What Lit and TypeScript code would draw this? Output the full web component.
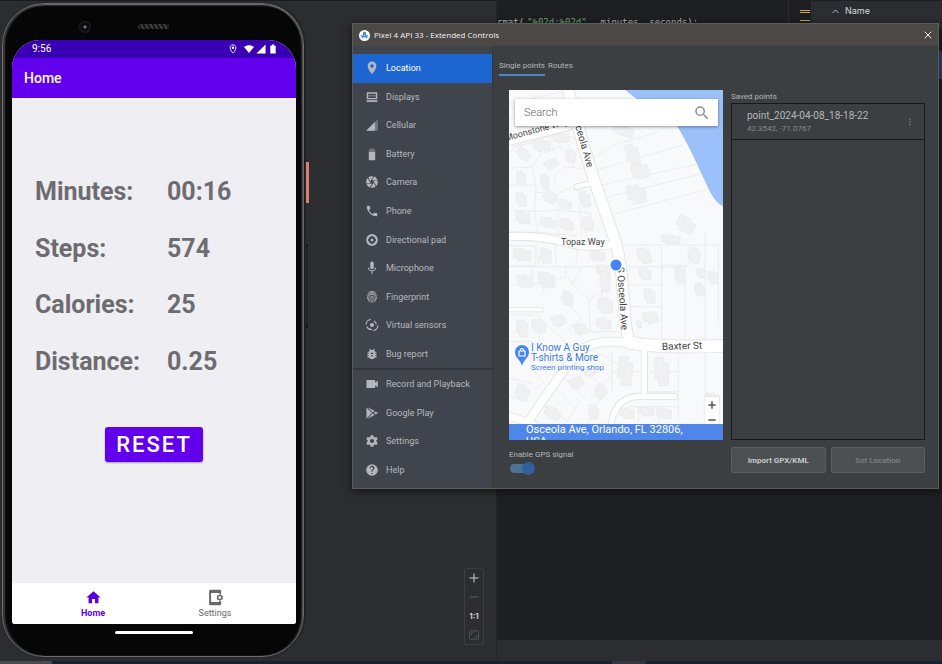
import { LitElement, html, svg, css, type TemplateResult, type SVGTemplateResult } from "lit";
import { customElement, property, state } from "lit/decorators.js";
import { classMap } from "lit/directives/class-map.js";

const ICONS: Record<string, SVGTemplateResult> = {
  location: svg`<path d="M12 1C7.600 1 4.500 4.200 4.500 8.500c0 5.500 7.500 14 7.500 14s7.500-8.500 7.500-14C19.500 4.200 16.400 1 12 1zm0 10.500a3 3 0 1 1 0-6 3 3 0 0 1 0 6z"/>`,
  displays: svg`<path d="M3 4h18v12H3zM5.500 6.500v7h13v-7z" fill-rule="evenodd"/><path d="M3 17.500h18v3H3z"/><path d="M5.500 9h13v2h-13z" opacity=".5"/>`,
  cellular: svg`<path d="M22 2v20H2z" opacity=".45"/><path d="M17 7v15H2z"/>`,
  battery: svg`<path d="M9 2h6v2h2.500v4h-11V4H9z" opacity=".4"/><path d="M6.500 8h11v13a1.500 1.500 0 0 1-1.500 1.500H8A1.500 1.500 0 0 1 6.500 21z"/>`,
  camera: svg`<path d="M9.400 10.500l4.770-8.260C13.470 2.090 12.750 2 12 2c-2.400 0-4.600.850-6.320 2.250l3.660 6.350.060-.1zM21.540 9c-.92-2.920-3.150-5.260-6-6.340L11.880 9h9.660zm.260 1h-7.490l.290.500 4.760 8.250C21 16.970 22 14.610 22 12c0-.690-.070-1.350-.2-2zM8.540 12l-3.900-6.750C3.010 7.030 2 9.390 2 12c0 .690.070 1.350.2 2h7.490l-1.150-2zm-6.080 3c.92 2.920 3.150 5.260 6 6.340L12.120 15H2.460zm11.270 0l-3.900 6.760c.7.150 1.420.240 2.170.240 2.400 0 4.600-.850 6.320-2.250l-3.660-6.350-.930 1.600z"/>`,
  phone: svg`<path d="M6.620 10.790c1.440 2.830 3.760 5.140 6.590 6.590l2.200-2.200c.270-.270.670-.360 1.020-.240 1.120.370 2.330.570 3.570.570.550 0 1 .450 1 1V20c0 .550-.450 1-1 1C10.610 21 3 13.390 3 4c0-.550.450-1 1-1h3.500c.550 0 1 .450 1 1 0 1.250.200 2.450.570 3.570.110.350.030.740-.250 1.020l-2.200 2.200z"/>`,
  dpad: svg`<circle cx="12" cy="12" r="8" fill="none" stroke="currentColor" stroke-width="4.200"/><path d="M12 4.500l3 3.500H9zM12 19.500l3-3.500H9zM4.500 12l3.500-3v6zM19.500 12L16 9v6z" fill="#40444c"/><circle cx="12" cy="12" r="2.600"/>`,
  mic: svg`<path d="M12 14c1.660 0 3-1.340 3-3V4c0-1.660-1.340-3-3-3S9 2.340 9 4v7c0 1.660 1.340 3 3 3zm5.300-3c0 3-2.540 5.100-5.300 5.100S6.700 14 6.700 11H5c0 3.410 2.720 6.230 6 6.720V22h2v-4.280c3.280-.480 6-3.300 6-6.720z"/>`,
  finger: svg`<g fill="none" stroke="currentColor" stroke-width="1.700" opacity=".8"><path d="M6 4.500c4-3 8-3 12 0M3.500 9.500c4-7 13-7 17 0M4 16c-1-13 17-13 16 0M6.500 19.500c-3-16 14-16 11 0M9 21.500c-3-14 9-14 6 0M12 10v12"/></g>`,
  sensors: svg`<circle cx="12" cy="12" r="3.600"/><path fill="none" stroke="currentColor" stroke-width="2" d="M2 11c0-4 3-8 8-8.500M3 14.500A9 9 0 0 0 12 20M22 13c0 4-3 8-8 8.500M19.500 11A8 8 0 0 0 15 5"/>`,
  bug: svg`<path d="M20 8h-2.810c-.450-.780-1.070-1.450-1.820-1.960L17 4.410 15.590 3l-2.170 2.170a6 6 0 0 0-2.830 0L8.410 3 7 4.410l1.620 1.630C7.880 6.550 7.260 7.220 6.810 8H4v2h2.090c-.050.330-.090.660-.090 1v1H4v2h2v1c0 .340.040.670.090 1H4v2h2.810a6 6 0 0 0 10.380 0H20v-2h-2.090c.050-.330.090-.660.090-1v-1h2v-2h-2v-1c0-.340-.040-.670-.090-1H20V8zm-6 8h-4v-2h4v2zm0-4h-4v-2h4v2z"/>`,
  video: svg`<path d="M17.500 10V6c0-.550-.450-1-1-1h-13c-.550 0-1 .450-1 1v12c0 .550.450 1 1 1h13c.550 0 1-.450 1-1v-4l4.500 4V6z"/>`,
  play: svg`<path d="M2.500 2.500l9.500 9.500-9.500 9.500z"/><path d="M4.500 2l12 6.700-3 3zM4.500 22l12-6.700-3-3zM18 9.500l4.500 2.500-4.500 2.500-2.500-2.500z"/>`,
  gear: svg`<path d="M19.430 12.980c.040-.320.070-.640.070-.980s-.030-.660-.070-.980l2.110-1.650c.190-.150.240-.420.120-.640l-2-3.460c-.120-.220-.390-.300-.610-.220l-2.490 1c-.520-.400-1.080-.730-1.690-.980l-.380-2.650A.49.49 0 0 0 14 2h-4c-.250 0-.460.180-.490.420l-.380 2.650c-.610.250-1.170.590-1.690.980l-2.490-1c-.230-.090-.490 0-.610.220l-2 3.460c-.130.220-.070.490.120.640l2.110 1.650c-.040.320-.070.650-.070.980s.030.660.070.980l-2.110 1.650c-.190.150-.240.420-.120.640l2 3.460c.120.220.390.300.610.220l2.490-1c.520.400 1.080.730 1.690.980l.380 2.650c.030.240.240.420.490.420h4c.250 0 .460-.180.490-.420l.380-2.650c.610-.250 1.170-.590 1.690-.980l2.490 1c.230.090.490 0 .610-.220l2-3.460c.120-.220.070-.490-.120-.640zM12 15.500a3.500 3.500 0 1 1 0-7 3.500 3.500 0 0 1 0 7z"/>`,
  help: svg`<path d="M12 2a10 10 0 1 0 0 20 10 10 0 0 0 0-20zm1 17h-2v-2h2zm2.070-7.750l-.9.920C13.450 12.900 13 13.500 13 15h-2v-.5c0-1.100.450-2.100 1.170-2.830l1.240-1.260A2 2 0 1 0 10 9H8a4 4 0 1 1 7.070 2.250z"/>`,
  search: svg`<path d="M15.500 14h-.790l-.280-.270A6.470 6.470 0 0 0 16 9.500 6.500 6.500 0 1 0 9.500 16c1.610 0 3.090-.590 4.230-1.570l.270.280v.790l5 4.990L20.490 19zm-6 0a4.500 4.500 0 1 1 0-9 4.500 4.500 0 0 1 0 9z"/>`,
  home: svg`<path d="M10 20v-6h4v6h5v-8h3L12 3 2 12h3v8z"/>`,
  appSettings: svg`<path d="M5 1h13a2 2 0 0 1 2 2v4h-2.500V5.500H5.800v13h11.700V17H20v4a2 2 0 0 1-2 2H5a2 2 0 0 1-2-2V3a2 2 0 0 1 2-2z"/><circle cx="18" cy="12" r="2.900" fill="none" stroke="currentColor" stroke-width="2"/><path d="M18 7.300v1.500M18 15.200v1.500M14 9.700l1.200.7M20.800 13.600l1.200.7M14 14.300l1.200-.7M20.800 10.400l1.200-.7" stroke="currentColor" stroke-width="1.800"/>`,
  pinOutline: svg`<path fill="none" stroke="currentColor" stroke-width="2.200" d="M12 2C8 2 5 5 5 9c0 5.500 7 13 7 13s7-7.500 7-13c0-4-3-7-7-7z"/><circle cx="12" cy="9" r="3"/>`,
  wifi: svg`<path d="M12 21.500L0 7c7-5.500 17-5.500 24 0z"/>`,
  signal: svg`<path d="M23 1v22H1z"/>`,
  batteryFull: svg`<path d="M9 1h6v3h3.500v19h-13V4H9z"/>`,
  close: svg`<path fill="none" stroke="currentColor" stroke-width="3" d="M2 2l20 20M22 2L2 22"/>`,
  more: svg`<circle cx="12" cy="4" r="2.500"/><circle cx="12" cy="12" r="2.500"/><circle cx="12" cy="20" r="2.500"/>`,
  chevronUp: svg`<path fill="none" stroke="currentColor" stroke-width="3" d="M2 17L12 7l10 10"/>`,
  plus: svg`<path fill="none" stroke="currentColor" stroke-width="2.500" d="M12 1v22M1 12h22"/>`,
  minus: svg`<path fill="none" stroke="currentColor" stroke-width="2.500" d="M1 12h22"/>`,
  plusBold: svg`<path fill="none" stroke="currentColor" stroke-width="4.500" d="M12 1v22M1 12h22"/>`,
  minusBold: svg`<path fill="none" stroke="currentColor" stroke-width="4.500" d="M1 12h22"/>`,
  fit: svg`<rect x="1" y="2" width="22" height="20" rx="2" fill="none" stroke="currentColor" stroke-width="2"/><path fill="none" stroke="currentColor" stroke-width="2" d="M6 12V7h5M18 12v5h-5"/>`,
};

const icon = (name: string, cls = ""): TemplateResult =>
  html`<svg class="icon ${cls}" viewBox="0 0 24 24" fill="currentColor" aria-hidden="true">${ICONS[name]}</svg>`;

@customElement("phone-screen")
class PhoneScreen extends LitElement {
  static styles = css`
    :host { display: flex; flex-direction: column; position: relative; box-sizing: border-box; width: 302px;
      padding: 36px 7px 32px 9px; border: 1px solid #6d6d6f; border-radius: 42px; background: #060607;
      box-shadow: inset 2px 0 1px #343437, inset 0 1px 2px #8f8f92, inset -2px 0 1px #29292b, inset 4px 0 1px #0c0c0d, 1px 0 2px #17181a;
      font-family: Roboto, sans-serif; }
    .icon { display: block; width: 10px; height: 10px; }
    .sensor { position: absolute; left: 76px; top: 17px; width: 12px; height: 12px; border-radius: 50%;
      background: radial-gradient(circle, #777 0 1px, #0b0c0f 2px 4px, #1b1b1e 5px); }
    .speaker { position: absolute; left: 135px; top: 20px; width: 31px; height: 5px; border-radius: 2px;
      background: repeating-linear-gradient(60deg, #3c3c3e 0 2px, #161617 2px 4px); }
    .power { position: absolute; right: -6px; top: 158px; width: 3px; height: 41px; background: #d9806c; }
    .volume { position: absolute; right: -5px; top: 240px; width: 2px; height: 78px; background: #222326;
      border-block: 3px solid #141517; }
    .screen { flex: 1; display: flex; flex-direction: column; overflow: hidden; border-radius: 28px 28px 3px 3px; background: #efeef3; }
    .status { display: flex; align-items: center; height: 18px; padding: 0 18px 0 20px; background: #3a00b3; color: #fff; font-size: 10px; line-height: 18px; }
    .time { flex: 1; }
    .status .icon + .icon { margin-left: 2px; }
    .status .pin { margin-right: 4px; }
    .appbar { height: 40px; padding-left: 12px; background: #6200ee; color: #fff; font-size: 14px; line-height: 40px; font-weight: 500; margin: 0; }
    .body { flex: 1; padding: 66px 0 0; display: flex; flex-direction: column; align-items: stretch; }
    dl { display: grid; grid-template-columns: 132px 1fr; grid-template-rows: repeat(4, 1fr); align-items: center; height: 226px;
      margin: 0; padding-left: 23px; color: #6d6c70; font-size: 25px; line-height: 30px; font-weight: 700; }
    dd { margin: 0; }
    .reset { align-self: center; width: 98px; height: 35px; margin-top: 37px; padding: 0; border: 0; border-radius: 3px; background: #6200ee; color: #fff;
      font: 500 22px/36px Roboto, sans-serif; letter-spacing: 2px; box-shadow: 0 1px 2px #0005; }
    nav { display: grid; grid-template-columns: 1fr 1fr; height: 41px; padding: 0 20px; background: #fff; }
    nav a { display: flex; flex-direction: column; align-items: center; gap: 1px; padding-top: 6px; color: #68686a; font-size: 9px; line-height: 12px; text-decoration: none; }
    nav a.on { color: #5b00e3; font-weight: 700; }
    nav .icon { width: 17px; height: 17px; }
    .pill { position: absolute; left: 112px; bottom: 22px; width: 78px; height: 3px; border-radius: 2px; background: #fff; }
  `;

  private stats = [["Minutes:", "00:16"], ["Steps:", "574"], ["Calories:", "25"], ["Distance:", "0.25"]];

  render() {
    return html`
      <span class="sensor"></span><span class="speaker"></span>
      <span class="power"></span><span class="volume"></span>
      <div class="screen">
        <div class="status"><span class="time">9:56</span>${icon("pinOutline", "pin")}${icon("wifi")}${icon("signal")}${icon("batteryFull")}</div>
        <h1 class="appbar">Home</h1>
        <div class="body">
          <dl>${this.stats.map(([k, v]) => html`<dt>${k}</dt><dd>${v}</dd>`)}</dl>
          <button class="reset">RESET</button>
        </div>
        <nav>
          <a class="on" href="#home">${icon("home")}Home</a>
          <a href="#settings">${icon("appSettings")}Settings</a>
        </nav>
      </div>
      <span class="pill"></span>`;
  }
}

/* Parcel boundaries, building footprints and road centre lines, in thirds of a map pixel. */
const PARCELS = [
  "M0 60L170 20M12 45l30 60M90 30l20 50M0 105l165-45M20 185L150 150l65 8M12 205l25-22 50-10M87 165l18 45-22 35-70 5M105 210l60-25 45 60M135 160l12 40M180 150l20 60M83 245l10 55-5 75M12 300h78M90 320l65 10 35-20 55 10M155 330l5 45M12 375l80 5 68-5 100 10M88 375l10 65M160 375l-2 80M225 360l5 95M12 440l90 2 110 10M150 300c-10-30 10-55 45-55l50 10M260 385l-20 60",
  "M255 225l75-45 130-40M275 255l260-75M290 300l285-62M310 335l295-72M325 388l280-75M320 480h340M470 480v290M550 480v60h-80M370 545h180M370 600h100M375 665h96M600 440v480M540 540v230M640 480v240",
  "M12 482h80v60h-80M92 482l10 58M150 480l5 65M220 480l-8 60M12 545h300M12 600l110-5M80 545l5 50M122 595l60-20 70 70 5 95M182 575v-30M252 645l60-40M200 600l30-55M122 595l-12 35M12 690h90v80M102 700l70 60 20 40M172 640l60 60-50 45M250 740h90M12 770h75M200 720l50 20M290 545v110",
  "M180 880l60 60M210 830l100 90M250 790l130 70M320 800v120M320 860h85M260 940l60-70M150 910l60 60M110 960l80 50M225 950l-40 60M290 930l-40 80M435 860h90M435 920h85M520 790v220M370 965h150M400 965v50M460 965v50M12 880l70 15M12 930l60 20M80 850l40 50",
];
const BUILDINGS = [
  "85 165 48 33 -12", "145 145 46 28 -10", "35 192 42 30 30", "182 195 30 36 10", "120 222 38 28 -35", "35 258 26 44 5", "107 268 24 42 0", "34 322 30 42 0", "115 318 40 34 25", "163 345 36 26 5", "225 322 30 44 -10",
  "34 380 40 36 0", "105 398 50 30 5", "165 402 40 34 3", "232 398 34 38 12", "325 120 62 32 15", "365 178 36 60 -12", "380 235 50 46 -15", "368 300 54 56 -8", "515 398 55 42 25", "470 450 55 26 0", "552 490 34 44 15", "400 488 36 48 -15",
  "25 492 52 34 0", "105 490 34 44 3", "255 496 45 32 0", "275 540 40 30 0", "38 570 42 38 -5", "100 562 48 46 0", "170 620 34 40 12", "285 560 30 60 0", "280 640 42 44 0", "142 690 38 34 -30", "80 705 42 36 5", "35 705 34 50 0", "210 715 34 34 -20", "275 700 42 32 0",
  "403 550 34 34 0", "418 612 32 42 0", "415 680 42 34 -15", "395 708 15 20 0", "510 545 28 50 0", "575 550 26 28 0", "570 595 28 38 0", "610 560 30 36 0", "340 815 42 86 5", "450 818 40 84 0", "195 875 38 36 -35", "268 900 36 38 40", "238 845 30 30 -35",
  "32 900 40 46 20", "118 968 48 34 20", "250 960 30 42 5", "345 970 42 30 0", "405 965 42 28 0", "455 970 44 30 0", "600 925 44 30 0",
];
const ROADS: [string, number][] = [
  ["M-10 172L100 145 190 122", 26],
  ["M182 -10L238 190 270 292 335 480Q352 560 356 640T372 775", 32],
  ["M262 294L215 305", 14],
  ["M-10 457Q90 448 170 470T325 478", 22],
  ["M-10 674H108", 11],
  ["M372 770Q420 790 680 782", 36],
  ["M380 775C290 760 240 775 205 820S150 890 70 1010", 24],
  ["M-10 985L90 1020", 20],
  ["M418 785V930", 16],
  ["M508 934H400Q322 940 318 1030", 16],
];

@customElement("map-view")
class MapView extends LitElement {
  static styles = css`
    :host { display: block; position: relative; overflow: hidden; background: #f8f9fb; font-family: Roboto, sans-serif; }
    .canvas { position: absolute; inset: 0; width: 100%; height: 100%; }
    .road { font: 400 10px Roboto, sans-serif; fill: #3f4246; stroke: #fff; stroke-width: 1px; paint-order: stroke; }
    .poi { font: 10px Roboto, sans-serif; fill: #3b78e0; stroke: #fff; stroke-width: 1px; paint-order: stroke; }
    .small { font-size: 8px; }
    .street { font-size: 9px; }
    .search { position: absolute; left: 6px; right: 5px; top: 9px; display: flex; align-items: center; height: 27px; padding: 0 7px 0 9px; background: #fff; box-shadow: 0 1px 3px #0006; }
    .search input { flex: 1; min-width: 0; border: 0; padding: 0; outline: 0; background: none; font: 300 11px Roboto, sans-serif; color: #444; }
    .search input::placeholder { color: #666; opacity: 1; }
    .icon { display: block; width: 18px; height: 18px; color: #8c8c8c; }
    .zoom { position: absolute; right: 4px; bottom: 16px; width: 14px; height: 27px; background: #fff; overflow: hidden; box-shadow: 0 0 2px #0002; }
    .zoom button { display: flex; align-items: center; justify-content: center; width: 14px; height: 15px; padding: 0; border: 0; background: none; }
    .zoom .icon { width: 8px; height: 8px; color: #555; }
    .address { position: absolute; left: 0; right: 0; bottom: 0; height: 16px; padding: 0 34px 0 17px; overflow: hidden; background: #4f86ea; color: #fff; font-size: 11px; line-height: 12px; margin: 0; }
  `;

  render() {
    return html`
      <svg class="canvas" viewBox="0 0 214 350" preserveAspectRatio="xMidYMid slice" role="img" aria-label="Map">
        <g transform="translate(-4 -5) scale(.3333)">
          ${PARCELS.map((d) => svg`<path d=${d} fill="none" stroke="#eaecee" stroke-width="3"/>`)}
          ${BUILDINGS.map((b) => {
            const [x, y, w, h, r] = b.split(" ").map(Number);
            return svg`<path d="M${x} ${y}h${w * 0.65}v${h * 0.2}h${w * 0.35}v${h * 0.8}h${-w * 0.75}v${-h * 0.25}h${-w * 0.25}z" transform="rotate(${r} ${x + w / 2} ${y + h / 2})" fill="#f0f0f1" stroke="#e8e9eb" stroke-width="2"/>`;
          })}
          <path d="M355 10L392 40 515 120Q550 180 575 235L610 310Q632 362 670 370V0z" fill="#9cc0fa"/>
          ${ROADS.map(([d, w]) => svg`<path d=${d} fill="none" stroke="#dfe1e5" stroke-width=${w + 5} stroke-linecap="round"/>`)}
          ${ROADS.map(([d, w]) => svg`<path d=${d} fill="none" stroke="#fff" stroke-width=${w} stroke-linecap="round"/>`)}
        </g>
        <text class="road street" transform="translate(-3 51) rotate(-15)">Moonstone Way</text>
        <text class="road" transform="translate(63 25) rotate(74)">Osceola Ave</text>
        <text class="road street" transform="translate(52 155)">Topaz Way</text>
        <text class="road" transform="translate(108 177) rotate(86)">S Osceola Ave</text>
        <text class="road" transform="translate(153 260) rotate(-2)">Baxter St</text>
        <circle cx="107" cy="175" r="7" fill="#fff"/><circle cx="107" cy="175" r="5.500" fill="#4285f4"/>
        <path d="M13 276C12 270 6 268 6 262a7 7 0 0 1 14 0C20 268 14 270 13 276z" fill="#4285f4"/>
        <path d="M10 261h6v5h-6zM11.500 261v-1a1.500 1.500 0 0 1 3 0v1" fill="none" stroke="#fff" stroke-width="1.200"/>
        <text class="poi" x="22" y="261">I Know A Guy</text>
        <text class="poi" x="22" y="271">T-shirts &amp; More</text>
        <text class="poi small" x="22" y="280">Screen printing shop</text>
      </svg>
      <label class="search"><input type="text" placeholder="Search" aria-label="Search" />${icon("search")}</label>
      <div class="zoom"><button aria-label="Zoom in">${icon("plusBold")}</button><button aria-label="Zoom out">${icon("minusBold")}</button></div>
      <p class="address">Osceola Ave, Orlando, FL 32806, USA</p>`;
  }
}

const MAIN_ITEMS = [
  ["location", "Location"], ["displays", "Displays"], ["cellular", "Cellular"], ["battery", "Battery"], ["camera", "Camera"], ["phone", "Phone"],
  ["dpad", "Directional pad"], ["mic", "Microphone"], ["finger", "Fingerprint"], ["sensors", "Virtual sensors"], ["bug", "Bug report"],
];
const EXTRA_ITEMS = [["video", "Record and Playback"], ["play", "Google Play"], ["gear", "Settings"], ["help", "Help"]];

@customElement("extended-controls")
class ExtendedControls extends LitElement {
  @state() private selected = "Location";

  static styles = css`
    :host { display: flex; flex-direction: column; box-sizing: border-box; border: 1px solid #5a5c5e; background: #3c3f41;
      box-shadow: 0 2px 8px #0009; font-family: Roboto, sans-serif; font-size: 8px; line-height: 12px; color: #b4b7ba; }
    button { font-family: inherit; padding: 0; border: 0; background: none; color: inherit; }
    .icon { display: block; width: 14px; height: 14px; }
    header { display: flex; align-items: center; gap: 4px; height: 22px; padding: 0 6px; background: #4b4845; color: #f0f0f0; }
    .title { flex: 1; margin: 0; font: 8px/12px "Open Sans", sans-serif; }
    .logo { width: 11px; height: 11px; }
    .close .icon { width: 8px; height: 8px; }
    .main { flex: 1; display: grid; grid-template-columns: 140px 1fr; }
    aside { padding-top: 8px; background: #40444c; border-right: 1px solid #33363a; }
    ul { display: grid; grid-auto-rows: 1fr; margin: 0; padding: 0; list-style: none; }
    .primary { height: 314px; }
    .extra { height: 114px; border-top: 2px solid #33373c; }
    .item { display: flex; align-items: center; gap: 7px; width: 100%; height: 100%; padding-left: 12px; font-size: 9px; color: #b7babf; text-align: left; }
    .item.on { background: #1d66d1; color: #fff; }
    .item .icon { color: #b3b6bb; }
    .content { display: flex; flex-direction: column; padding: 11px 13px 13px 16px; }
    .tabs { display: flex; gap: 3px; margin: 0 0 14px -10px; }
    .tabs button { height: 19px; font-size: 8px; line-height: 16px; border-bottom: 2px solid transparent; }
    .tabs .on { border-color: #4a88c7; }
    .cols { flex: 1; display: grid; grid-template-columns: 214fr 194fr; gap: 8px; }
    .col { display: flex; flex-direction: column; }
    map-view { height: 350px; }
    .gps { display: flex; flex-direction: column; gap: 3px; margin-top: 9px; }
    .gps input { appearance: none; position: relative; width: 22px; height: 9px; margin: 0 1px; border-radius: 5px; background: #4b7494; }
    .gps input::after { content: ""; position: absolute; right: -3px; top: -2px; width: 13px; height: 13px; border-radius: 50%; background: #31609a; }
    h2 { margin: 0; font-size: 8px; line-height: 13px; font-weight: 400; }
    .points { height: 335px; border: 1px solid #17191a; }
    .point { display: flex; align-items: center; height: 35px; padding: 0 10px 0 15px; border-bottom: 1px solid #17191a; }
    .point p { flex: 1; margin: 0; font-size: 10px; line-height: 13px; color: #b4b7ba; }
    .point small { display: block; font-size: 8px; line-height: 13px; color: #85888a; }
    .point .icon { width: 8px; height: 10px; color: #777a7c; }
    .buttons { display: grid; grid-template-columns: 1fr 1fr; gap: 5px; margin-top: 7px; }
    .buttons button { height: 26px; border: 1px solid #5a5e60; border-radius: 2px; background: #4c5052; font-size: 8px; font-weight: 700; color: #c4c7c9; }
    .buttons button:disabled { color: #797c7e; }
  `;

  private list(items: string[][], cls: string) {
    return html`<ul class=${cls}>${items.map(([i, label]) => html`<li>
      <button class=${classMap({ item: true, on: this.selected === label })} @click=${() => (this.selected = label)}>${icon(i)}${label}</button></li>`)}</ul>`;
  }

  render() {
    return html`
      <header>
        <svg class="logo" viewBox="0 0 24 24" aria-hidden="true"><circle cx="12" cy="12" r="12" fill="#fff"/><path d="M12 5L7 18M12 5l5 13M4 12.500q8 4 16 0" fill="none" stroke="#3f86e6" stroke-width="3"/><circle cx="12" cy="7" r="3" fill="#3c86ee"/></svg>
        <h1 class="title">Pixel 4 API 33 - Extended Controls</h1>
        <button class="close" aria-label="Close">${icon("close")}</button>
      </header>
      <div class="main">
        <aside>${this.list(MAIN_ITEMS, "primary")}${this.list(EXTRA_ITEMS, "extra")}</aside>
        <section class="content">
          <div class="tabs"><button class="on">Single points</button><button>Routes</button></div>
          <div class="cols">
            <div class="col">
              <map-view></map-view>
              <div class="gps"><label for="gps">Enable GPS signal</label><input id="gps" type="checkbox" checked /></div>
            </div>
            <div class="col">
              <h2>Saved points</h2>
              <div class="points"><div class="point"><p>point_2024-04-08_18-18-22<small>42.3542, -71.0767</small></p><button aria-label="More">${icon("more")}</button></div></div>
              <div class="buttons"><button>Import GPX/KML</button><button disabled>Set Location</button></div>
            </div>
          </div>
        </section>
      </div>`;
  }
}

@customElement("app-root")
class AppRoot extends LitElement {
  @property() code = '"%02d:%02d"';

  static styles = css`
    :host { display: block; position: relative; height: 100vh; overflow: hidden; background: #1e1f22; font-family: Inter, sans-serif; }
    .ide { display: grid; grid-template-columns: 497px 1fr; grid-template-rows: 1fr 3px; height: 100%; }
    .emulator { display: flex; justify-content: space-between; padding: 2px 12px 4px 2px; border-top: 1px solid #1a1b1e; border-right: 1px solid #222427; background: #2b2d30; }
    .tools { align-self: flex-end; display: grid; grid-auto-rows: 1fr; width: 18px; height: 75px; margin-bottom: 12px; border: 1px solid #3c3e42; border-radius: 2px; }
    .tools button { display: flex; align-items: center; justify-content: center; padding: 0; border: 0; background: none; color: #ced0d6; font: 700 8px Inter, sans-serif; }
    .tools button:disabled { color: #5a5d61; }
    .icon { display: block; width: 10px; height: 10px; }
    .editor { display: grid; grid-template-columns: 1fr 23px 131px; grid-template-rows: 1fr 21px; }
    .code { display: flex; gap: 3px; height: 12px; padding-top: 16px; overflow: hidden; color: #b0b4bb; font: 9px/12px "DejaVu Sans Mono", monospace; white-space: pre; }
    .code .str { color: #6aab73; }
    .marks { display: flex; flex-direction: column; gap: 1px; align-items: flex-end; height: 14px; padding: 10px 1px 0 0; border-left: 1px solid #2b2d30; }
    .mark { flex: none; width: 10px; height: 1px; background: #c9a64e; }
    .mark:nth-child(3) { margin-top: 6px; }
    .files { border-top: 1px solid #1e1f22; }
    .head { display: flex; align-items: center; gap: 6px; height: 20px; margin: 0; padding: 0 0 8px 21px; background: #2b2d30; font-size: 9px; font-weight: 400; line-height: 20px; color: #d5d7db; }
    .head .icon { width: 7px; height: 7px; }
    .row { height: 28px; margin-top: 22px; background: #2e436e; }
    .foot { grid-column: 1 / -1; background: #2b2d30; }
    .taskbar { grid-column: 1 / -1; display: grid; grid-template-columns: 52px 560px 34px; background: #1a2230; }
    .task { background: #494b4f; }
    .task:last-child { grid-column: 3; background: #33363c; }
    extended-controls { position: absolute; left: 352px; right: 3px; top: 23px; min-height: 466px; }
  `;

  render() {
    return html`
      <main class="ide">
        <section class="emulator">
          <phone-screen></phone-screen>
          <div class="tools">
            <button aria-label="Zoom in">${icon("plus")}</button>
            <button aria-label="Zoom out" disabled>${icon("minus")}</button>
            <button>1:1</button>
            <button aria-label="Fit" disabled>${icon("fit")}</button>
          </div>
        </section>
        <section class="editor">
          <div class="code"><span>rmat(</span><span class="str">${this.code}</span><span>, minutes, seconds);</span></div>
          <div class="marks"><span class="mark"></span><span class="mark"></span><span class="mark"></span></div>
          <div class="files"><h2 class="head">${icon("chevronUp")}Name</h2><div class="row"></div></div>
          <div class="foot"></div>
        </section>
        <div class="taskbar"><span class="task"></span><span class="task"></span></div>
      </main>
      <extended-controls></extended-controls>`;
  }
}
